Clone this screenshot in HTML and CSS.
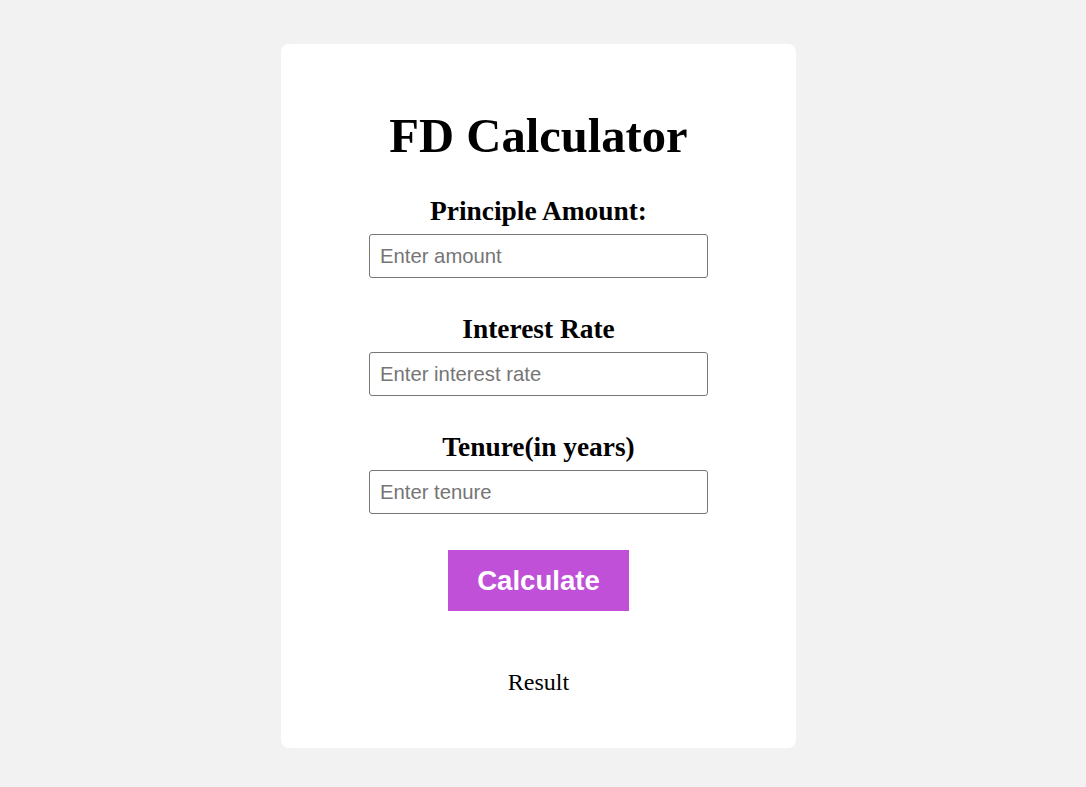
FILE: index.html
```html
<!DOCTYPE html>
<html>
<head>
<meta charset="utf-8">
<link rel="stylesheet" href="styles.css">
</head>
<body>
<div class="card">
  <h1 class="title">FD Calculator</h1>
  <div class="field">
    <label class="label">Principle Amount:</label>
    <input class="input" type="text" placeholder="Enter amount">
  </div>
  <div class="field">
    <label class="label">Interest Rate</label>
    <input class="input" type="text" placeholder="Enter interest rate">
  </div>
  <div class="field">
    <label class="label">Tenure(in years)</label>
    <input class="input" type="text" placeholder="Enter tenure">
  </div>
  <button class="btn">Calculate</button>
  <p class="result">Result</p>
</div>
</body>
</html>
```

FILE: styles.css
```css
html, body {
  margin: 0;
  padding: 0;
}
body {
  background: #f2f2f2;
  font-family: "Liberation Serif", "Times New Roman", serif;
  padding: 44px 9px 39px 0;
  display: flex;
  justify-content: center;
}
.card {
  width: 515px;
  height: 704px;
  box-sizing: border-box;
  background: #fff;
  border-radius: 8px;
  display: flex;
  flex-direction: column;
  align-items: center;
  padding-top: 64px;
}
.title {
  margin: 0 0 31px;
  font-size: 48.6px;
  font-weight: bold;
  line-height: 56px;
}
.field {
  display: flex;
  flex-direction: column;
  align-items: center;
  gap: 7px;
  margin-bottom: 35px;
}
.field:last-of-type {
  margin-bottom: 36px;
}
.label {
  font-size: 27.4px;
  font-weight: bold;
  line-height: 32px;
}
.input {
  width: 339px;
  height: 44px;
  box-sizing: border-box;
  border: 1px solid #767676;
  border-radius: 3px;
  padding: 0 10px;
  font-family: "Liberation Sans", Arial, sans-serif;
  font-size: 20.3px;
  color: #000;
}
.input::placeholder {
  color: #757575;
}
.btn {
  width: 181px;
  height: 61px;
  background: #c050d8;
  color: #fff;
  border: none;
  font-family: "Liberation Sans", Arial, sans-serif;
  font-size: 27.6px;
  font-weight: bold;
  margin-bottom: 57px;
}
.result {
  font-size: 24px;
  line-height: 28px;
  margin: 0;
}
```
